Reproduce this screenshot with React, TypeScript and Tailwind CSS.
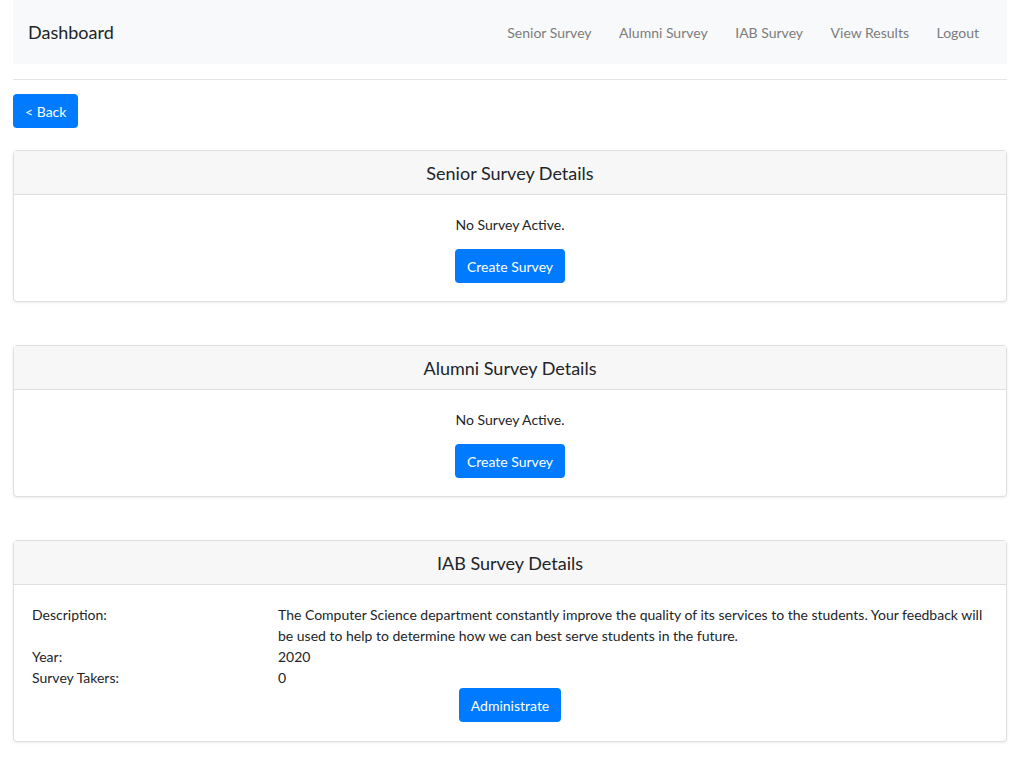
const font = { fontFamily: 'Lato, "Open Sans", sans-serif' };

function Button({ children }: { children: React.ReactNode }) {
  return (
    <button className="h-[34px] rounded bg-[#007bff] px-3 text-[14px] text-white">
      {children}
    </button>
  );
}

function Card({ title, children }: { title: string; children: React.ReactNode }) {
  return (
    <div className="rounded border border-[#dfdfdf] bg-white shadow-[0_1px_3px_rgba(0,0,0,0.08)]">
      <div className="flex h-[44px] items-center justify-center border-b border-[#dfdfdf] bg-[#f7f7f7] pt-px text-[18px] text-[#212529]">
        {title}
      </div>
      {children}
    </div>
  );
}

function EmptySurvey() {
  return (
    <div className="flex flex-col items-center px-5 pt-[19px] pb-[18px]">
      <p className="text-[14px] leading-[21px] text-[#212529]">No Survey Active.</p>
      <div className="mt-[14px]">
        <Button>Create Survey</Button>
      </div>
    </div>
  );
}

export default function App() {
  const links = ["Senior Survey", "Alumni Survey", "IAB Survey", "View Results", "Logout"];
  return (
    <div className="min-h-screen bg-white px-[13px]" style={font}>
      <nav className="flex h-16 items-center justify-between bg-[#f8f9fa] pl-[15px] pr-[28px]">
        <span className="text-[18px] text-[#212529]">Dashboard</span>
        <ul className="flex gap-[27.5px] text-[14px] text-[#7c7c7d]">
          {links.map((l) => (
            <li key={l}>{l}</li>
          ))}
        </ul>
      </nav>
      <hr className="mt-[15px] border-[#e5e5e5]" />
      <div className="mt-[14px]">
        <button className="h-[34px] rounded bg-[#007bff] px-3 text-[14px] text-white">&lt; Back</button>
      </div>
      <div className="mt-[22px] flex flex-col gap-[43px]">
        <Card title="Senior Survey Details">
          <EmptySurvey />
        </Card>
        <Card title="Alumni Survey Details">
          <EmptySurvey />
        </Card>
        <Card title="IAB Survey Details">
          <div className="px-[18px] pt-[19px] pb-[19px] text-[14px] leading-[21px] text-[#212529]">
            <div className="grid grid-cols-[246px_1fr]">
              <span>Description:</span>
              <span>
                The Computer Science department constantly improve the quality of its services to the
                students. Your feedback will be used to help to determine how we can best serve students in
                the future.
              </span>
              <span>Year:</span>
              <span>2020</span>
              <span>Survey Takers:</span>
              <span>0</span>
            </div>
            <div className="flex justify-center">
              <Button>Administrate</Button>
            </div>
          </div>
        </Card>
      </div>
    </div>
  );
}
